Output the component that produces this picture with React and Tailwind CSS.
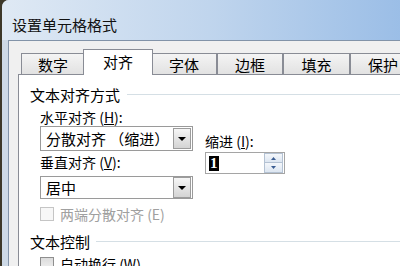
import React from "react";

const tabs = [
  { label: "数字", w: "w-[64px]" },
  { label: "对齐", w: "w-[70px]", active: true },
  { label: "字体", w: "w-[66px]" },
  { label: "边框", w: "w-[66px]" },
  { label: "填充", w: "w-[67px]" },
  { label: "保护", w: "w-[66px]" },
];

function Tab({ label, w, active }) {
  if (active) {
    return (
      <div
        className={`${w} relative z-10 -mx-[2px] -mb-px flex h-[26px] shrink-0 items-center justify-center border border-b-0 border-[#898c95] bg-white pb-[1px] text-[15px]`}
      >
        {label}
      </div>
    );
  }
  return (
    <div
      className={`${w} flex h-[21px] shrink-0 items-center justify-center border border-b-0 border-[#898c95] bg-gradient-to-b from-[#f4f4f4] to-[#e2e2e2] pt-[2px] text-[15px]`}
    >
      {label}
    </div>
  );
}

function GroupHead({ title, gap }) {
  return (
    <div className="flex h-[20px] items-center">
      <span className="text-[15px] leading-none">{title}</span>
      <div className={`${gap} mt-[1px] h-px flex-1 bg-[#d5dfe5]`} />
    </div>
  );
}

function DropArrow() {
  return (
    <div className="ml-auto mr-[1px] flex h-[21px] w-[18px] items-center justify-center border border-[#9c9c9c] bg-gradient-to-b from-[#f6f6f6] to-[#d4d4d4]">
      <svg width="8" height="4" viewBox="0 0 8 4">
        <path d="M0 0h8L4 4z" fill="#000" />
      </svg>
    </div>
  );
}

function Select({ value, h }) {
  return (
    <div className={`${h} flex items-center border border-[#9a9a9a] bg-white`}>
      <span className="whitespace-pre pl-[5px] text-[15px] leading-none">{value}</span>
      <DropArrow />
    </div>
  );
}

function SpinBox() {
  return (
    <div className="flex h-[22px] w-[80px] items-center border border-[#a5a5a5] bg-white">
      <span className="ml-[3px] bg-black px-[1px] text-[15px] leading-[15px] text-white [font-family:'Liberation_Serif',serif] font-bold">
        1
      </span>
      <div className="ml-auto mr-[1px] flex h-[20px] w-[19px] flex-col">
        <div className="flex h-[10px] items-center justify-center border border-[#b4c2d3] bg-gradient-to-b from-[#f4f7fb] to-[#dde6f1]">
          <svg width="5" height="3" viewBox="0 0 5 3">
            <path d="M0 3L2.5 0L5 3z" fill="#3b5d92" />
          </svg>
        </div>
        <div className="flex h-[10px] items-center justify-center border border-t-0 border-[#b4c2d3] bg-gradient-to-b from-[#f4f7fb] to-[#dde6f1]">
          <svg width="5" height="3" viewBox="0 0 5 3">
            <path d="M0 0h5L2.5 3z" fill="#3b5d92" />
          </svg>
        </div>
      </div>
    </div>
  );
}

function Check({ label, disabled }) {
  return (
    <div className="flex items-center">
      <div
        className={
          disabled
            ? "h-[14px] w-[14px] border border-[#c5c5c5] bg-[#f7f7f7]"
            : "h-[14px] w-[14px] border border-[#8e8e8e] bg-gradient-to-b from-[#dcdcdc] to-[#f2f2f2]"
        }
      />
      <span
        className={`ml-[6px] text-[14px] leading-none ${
          disabled ? "text-[#a0a0a0]" : "text-black"
        }`}
      >
        {label}
      </span>
    </div>
  );
}

export default function App() {
  return (
    <div className="flex h-[266px] w-[400px] overflow-hidden bg-[#3d3829] text-black [font-family:'Noto_Sans_CJK_SC','Noto_Sans',sans-serif]">
      <div className="ml-[2px] flex flex-1 flex-col rounded-tl-[7px] bg-[#cdd9e6]">
        {/* title bar */}
        <div className="flex h-[40px] shrink-0 items-center rounded-tl-[7px] bg-gradient-to-r from-[#dfe9f4] via-[#c0d5ed] to-[#98bce6] pl-[10px] pt-[8px]">
          <span className="text-[15px] leading-none text-[#111]">设置单元格格式</span>
        </div>

        {/* client area */}
        <div className="ml-[6px] flex flex-1 flex-col border-l border-t border-[#8293a8] bg-[#f0f0f0] pl-[9px] pt-[8px]">
          <div className="flex h-[25px] items-end pl-[3px]">
            {tabs.map((t) => (
              <Tab key={t.label} {...t} />
            ))}
          </div>

          <div className="flex flex-1 flex-col border-l border-t border-[#898c95] bg-white pl-[11px] pt-[9px]">
            <GroupHead title="文本对齐方式" gap="ml-[7px]" />

            <div className="flex pl-[10px]">
              <div className="flex w-[153px] flex-col">
                <div className="mt-[4px] flex h-[18px] items-center text-[14px]">
                  水平对齐 (<u>H</u>):
                </div>
                <Select value="分散对齐 （缩进）" h="h-[25px]" />
                <div className="mt-[2px] flex h-[18px] items-center text-[14px]">
                  垂直对齐 (<u>V</u>):
                </div>
                <div className="mt-[5px]">
                  <Select value="居中" h="h-[23px]" />
                </div>
              </div>

              <div className="ml-[12px] flex flex-col">
                <div className="mt-[28px] flex h-[18px] items-center text-[14px]">
                  缩进 (<u>I</u>):
                </div>
                <div className="mt-[2px]">
                  <SpinBox />
                </div>
              </div>
            </div>

            <div className="mt-[8px] pl-[10px]">
              <Check label="两端分散对齐 (E)" disabled />
            </div>

            <div className="mt-[10px]">
              <GroupHead title="文本控制" gap="ml-[6px]" />
            </div>

            <div className="mt-[6px] pl-[10px]">
              <Check label="自动换行 (W)" />
            </div>
          </div>
        </div>
      </div>
    </div>
  );
}
